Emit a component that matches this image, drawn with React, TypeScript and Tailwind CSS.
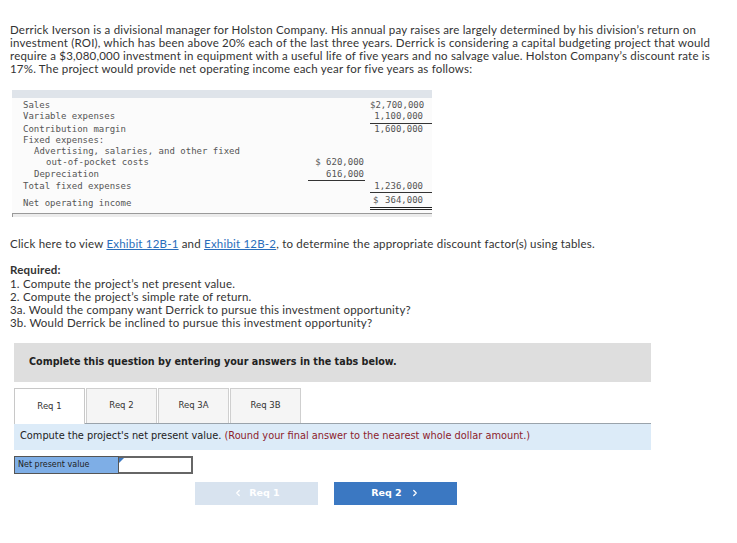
import { ChevronLeft, ChevronRight } from 'lucide-react';

const mono = { fontFamily: '"DejaVu Sans Mono", monospace' };

type Row = { label: string; indent?: number; mid?: string; right?: string; midLine?: boolean; rightLine?: boolean };

const rows: Row[] = [
  { label: 'Sales', right: '$2,700,000' },
  { label: 'Variable expenses', right: '1,100,000', rightLine: true },
  { label: 'Contribution margin', right: '1,600,000' },
  { label: 'Fixed expenses:' },
  { label: 'Advertising, salaries, and other fixed', indent: 1 },
  { label: 'out-of-pocket costs', indent: 2, mid: '$ 620,000' },
  { label: 'Depreciation', indent: 1, mid: '616,000', midLine: true },
  { label: 'Total fixed expenses', right: '1,236,000', rightLine: true },
];

export default function App() {
  return (
    <div className="w-[737px] h-[543px] bg-white text-[#333] font-['Lato',sans-serif] overflow-hidden">
      {/* Problem text */}
      <p className="pt-[23px] pl-[10px] text-[11.5px] leading-[13px] tracking-[0.2px] whitespace-nowrap">
        Derrick Iverson is a divisional manager for Holston Company. His annual pay raises are largely determined by his division’s return on<br />
        investment (ROI), which has been above 20% each of the last three years. Derrick is considering a capital budgeting project that would<br />
        require a $3,080,000 investment in equipment with a useful life of five years and no salvage value. Holston Company’s discount rate is<br />
        17%. The project would provide net operating income each year for five years as follows:
      </p>

      {/* Income statement */}
      <div className="ml-[12px] mt-[15px] w-[420px] bg-[#fbfbfb] text-[9px] leading-[11.3px] text-[#555]" style={mono}>
        <div className="h-[8px] bg-[#dfe4ea]" />
        <div className="grid grid-cols-[296px_57px_5px_62px] pt-[2px]">
          {rows.map(r => (
            <div key={r.label} className="contents">
              <div className={r.indent === 2 ? 'pl-[34px]' : r.indent === 1 ? 'pl-[22px]' : 'pl-[11px]'}>{r.label}</div>
              <div className={`text-right pr-[1px] ${r.midLine ? 'border-b border-[#333]' : ''}`}>{r.mid}</div>
              <div />
              <div className={`text-right pr-[9px] ${r.rightLine ? 'border-b border-[#333]' : ''}`}>{r.right}</div>
            </div>
          ))}
          <div className="pl-[11px] pt-[5px] pb-[2px]">Net operating income</div>
          <div />
          <div />
          <div className="pt-[2px] mb-[3px] pl-[3px] pr-[9px] flex justify-between border-b-[3px] border-double border-[#222]">
            <span>$</span>
            <span>364,000</span>
          </div>
        </div>
        <div className="h-[4px] border-t border-l border-[#9a9a9a] bg-[#ececec]" />
      </div>

      {/* Instructions */}
      <div className="pl-[10px] text-[11.5px] leading-[13px] tracking-[0.2px]">
        <p className="mt-[20px]">
          Click here to view <span className="text-[#2a6ebb] underline">Exhibit 12B-1</span> and{' '}
          <span className="text-[#2a6ebb] underline">Exhibit 12B-2</span>, to determine the appropriate discount factor(s) using tables.
        </p>
        <p className="mt-[13px] font-bold">Required:</p>
        <p className="mt-[1px]">1. Compute the project’s net present value.</p>
        <p>2. Compute the project’s simple rate of return.</p>
        <p>3a. Would the company want Derrick to pursue this investment opportunity?</p>
        <p>3b. Would Derrick be inclined to pursue this investment opportunity?</p>
      </div>

      {/* Answer area */}
      <div className="ml-[14px] mt-[14px] w-[637px] font-['DejaVu_Sans',sans-serif]">
        <div className="h-[39px] bg-[#dedede] flex items-center pl-[15px] text-[9.6px] font-bold text-[#222]">
          Complete this question by entering your answers in the tabs below.
        </div>

        <div className="mt-[6px] flex gap-[1px] text-[8.5px] text-[#333]">
          <div className="w-[71px] h-[36px] flex items-center justify-center bg-white border border-b-0 border-[#c8c8c8] relative z-10 -mb-px">Req 1</div>
          <div className="w-[71px] h-[35px] flex items-center justify-center bg-[#f5f5f5] border border-b-0 border-[#cfcfcf]">Req 2</div>
          <div className="w-[71px] h-[35px] flex items-center justify-center bg-[#f5f5f5] border border-b-0 border-[#cfcfcf]">Req 3A</div>
          <div className="w-[71px] h-[35px] flex items-center justify-center bg-[#f5f5f5] border border-b-0 border-[#cfcfcf]">Req 3B</div>
        </div>

        <div className="h-[27px] border-t border-[#9aa3ab] bg-[#dcebf8] flex items-center pl-[6px] text-[9.8px] text-[#222] whitespace-nowrap">
          Compute the project's net present value.&nbsp;<span className="text-[#8c1c2c]">(Round your final answer to the nearest whole dollar amount.)</span>
        </div>

        <div className="mt-[6px] flex h-[18px] text-[8px] text-[#222]">
          <div className="w-[105px] bg-[#7eaee6] border border-[#555] flex items-center pl-[3px]">Net present value</div>
          <div className="relative w-[74px] bg-white border-2 border-l-0 border-[#666]">
            <div className="absolute left-0 top-0 w-0 h-0 border-t-[5px] border-r-[5px] border-t-[#3b78c2] border-r-transparent" />
          </div>
        </div>

        <div className="mt-[8px] flex gap-[16px] ml-[181px]">
          <div className="w-[123px] h-[23px] bg-[#d8e3ef] text-white flex items-center justify-center gap-[6px] text-[9.5px] font-bold">
            <ChevronLeft size={10} strokeWidth={3} />
            <span>Req 1</span>
          </div>
          <div className="w-[123px] h-[23px] bg-[#3b78c2] text-white flex items-center justify-center gap-[8px] text-[9.5px] font-bold">
            <span>Req 2</span>
            <ChevronRight size={10} strokeWidth={3} />
          </div>
        </div>
      </div>
    </div>
  );
}
